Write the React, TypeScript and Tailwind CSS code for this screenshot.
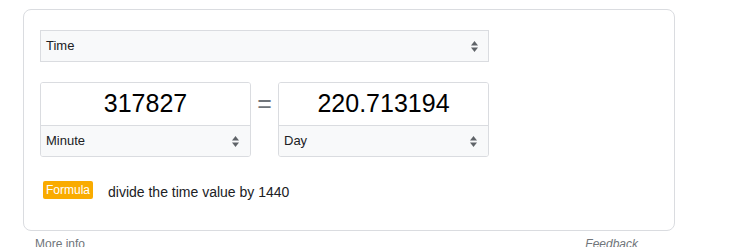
import React from 'react';

const Arrows = () => (
  <svg width="7" height="11" viewBox="0 0 7 11" className="shrink-0">
    <polygon points="0,4.5 3.5,0 7,4.5" fill="#5f6368" />
    <polygon points="0,6.5 7,6.5 3.5,11" fill="#5f6368" />
  </svg>
);

const UnitBox = ({ value, unit, width }: { value: string; unit: string; width: string }) => (
  <div className={`${width} border border-[#dadce0] rounded-[3px] overflow-hidden`}>
    <div className="h-[42px] bg-white flex items-center justify-center text-[25px] text-black">
      {value}
    </div>
    <div className="h-[31px] border-t border-[#dadce0] bg-[#f8f9fa] flex items-center justify-between pl-[5px] pr-[11px] text-[13px] text-[#202124]">
      <span>{unit}</span>
      <Arrows />
    </div>
  </div>
);

export default function App() {
  return (
    <div className="w-[734px] h-[247px] overflow-hidden bg-white pl-[23px] pt-[9px] font-['Liberation_Sans',Arial,sans-serif]">
      <div className="w-[652px] h-[222px] border border-[#dadce0] rounded-lg pl-[16px] pt-[20px]">
        <div className="w-[449px] h-[32px] border border-[#dadce0] bg-[#f8f9fa] flex items-center justify-between pl-[5px] pr-[10px] text-[13px] text-[#202124]">
          <span>Time</span>
          <Arrows />
        </div>

        <div className="mt-[20px] w-[449px] flex items-start">
          <UnitBox value="317827" unit="Minute" width="w-[211px]" />
          <div className="w-[27px] h-[43px] flex items-center justify-center text-[25px] text-[#70757a]">=</div>
          <UnitBox value="220.713194" unit="Day" width="w-[211px]" />
        </div>

        <div className="mt-[20px] flex items-center gap-[15px] pl-[3px]">
          <span className="h-[18px] px-[3px] rounded-[2px] bg-[#f9ab00] text-white text-[12px] leading-[18px]">Formula</span>
          <span className="pt-[5px] text-[14px] text-[#202124]">divide the time value by 1440</span>
        </div>
      </div>

      <div className="w-[652px] mt-[5px] flex justify-between pl-[12px] pr-[37px] text-[12px] leading-[16px] text-[#70757a]">
        <span>More info</span>
        <span className="italic">Feedback</span>
      </div>
    </div>
  );
}
